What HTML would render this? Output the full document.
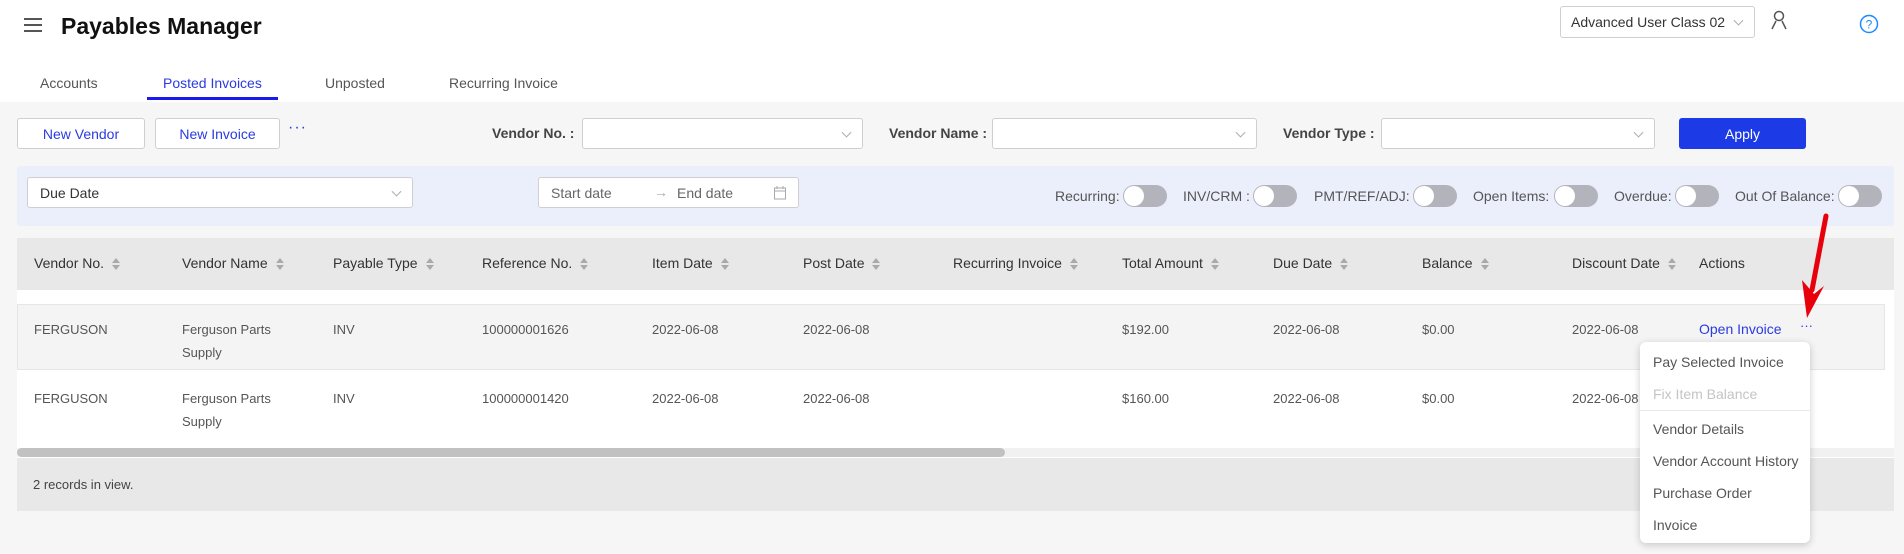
<!DOCTYPE html>
<html><head><meta charset="utf-8"><style>
*{box-sizing:border-box;margin:0;padding:0}
body{width:1904px;height:554px;overflow:hidden;background:#f6f6f6;font-family:"Liberation Sans",Arial,sans-serif;position:relative;color:#333}
.a{position:absolute;white-space:nowrap}
.sel{position:absolute;background:#fff;border:1px solid #cfcfcf;border-radius:3px}
.chev{position:absolute;right:12px;top:50%;width:7px;height:7px;border-right:1px solid #aaa;border-bottom:1px solid #aaa;transform:translateY(-70%) rotate(45deg)}
.btn{position:absolute;background:#fff;border:1px solid #cfcfcf;border-radius:3px;color:#2a3be0;font-size:14px;display:flex;align-items:center;justify-content:center}
.lbl{position:absolute;font-size:14px;font-weight:bold;color:#444;transform:translateY(-50%)}
.tg{position:absolute;width:44px;height:22px;border-radius:11px;background:#b3b3bb;top:185px}
.tg:after{content:"";position:absolute;left:1px;top:1px;width:20px;height:20px;border-radius:50%;background:#fff}
.tl{position:absolute;font-size:14px;color:#555;top:196px;transform:translateY(-50%)}
.th{position:absolute;top:263px;font-size:14px;color:#333;transform:translateY(-50%)}
.srt{display:inline-block;margin-left:8px;vertical-align:middle;width:8px;height:12px;position:relative}
.srt:before,.srt:after{content:"";position:absolute;left:0;border-left:4px solid transparent;border-right:4px solid transparent}
.srt:before{top:0;border-bottom:5px solid #aaa}
.srt:after{bottom:0;border-top:5px solid #aaa}
.td{position:absolute;font-size:13px;color:#555;line-height:23px}
.mi{position:absolute;left:1653px;font-size:14px;color:#555;transform:translateY(-50%)}
</style></head><body>
<div class="a" style="left:0;top:0;width:1904px;height:102px;background:#fff"></div>
<div class="a" style="left:24px;top:18px;width:18px;height:2px;background:#555;box-shadow:0 6px 0 #555,0 12px 0 #555"></div>
<div class="a" style="left:61px;top:13px;font-size:23px;font-weight:bold;color:#111">Payables Manager</div>
<div class="sel" style="left:1560px;top:6px;width:195px;height:32px"><span class="a" style="left:10px;top:7px;font-size:14px;color:#333">Advanced User Class 02</span><span class="chev"></span></div>
<svg class="a" style="left:1770px;top:10px" width="18" height="20" viewBox="0 0 18 20"><circle cx="9" cy="6" r="4.5" fill="none" stroke="#555" stroke-width="1.5"/><path d="M2 19 L6 11 M16 19 L12 11" stroke="#555" stroke-width="1.5" fill="none"/></svg>
<svg class="a" style="left:1859px;top:14px" width="20" height="20" viewBox="0 0 20 20"><circle cx="10" cy="10" r="8.5" fill="none" stroke="#1a8cff" stroke-width="1.5"/><text x="10" y="14.5" font-size="12" text-anchor="middle" fill="#1a8cff" font-family="Liberation Sans">?</text></svg>
<div class="a" style="left:40px;top:75px;font-size:14px;color:#555">Accounts</div>
<div class="a" style="left:163px;top:75px;font-size:14px;color:#2a3be0">Posted Invoices</div>
<div class="a" style="left:325px;top:75px;font-size:14px;color:#555">Unposted</div>
<div class="a" style="left:449px;top:75px;font-size:14px;color:#555">Recurring Invoice</div>
<div class="a" style="left:147px;top:97px;width:131px;height:3px;background:#1a1aee"></div>

<div class="btn" style="left:17px;top:118px;width:128px;height:31px">New Vendor</div>
<div class="btn" style="left:155px;top:118px;width:125px;height:31px">New Invoice</div>
<div class="a" style="left:288px;top:119px;font-size:16px;color:#2a3be0;letter-spacing:1px">···</div>
<div class="lbl" style="left:492px;top:133px">Vendor No. :</div>
<div class="sel" style="left:582px;top:118px;width:281px;height:31px"><span class="chev"></span></div>
<div class="lbl" style="left:889px;top:133px">Vendor Name :</div>
<div class="sel" style="left:992px;top:118px;width:265px;height:31px"><span class="chev"></span></div>
<div class="lbl" style="left:1283px;top:133px">Vendor Type :</div>
<div class="sel" style="left:1381px;top:118px;width:274px;height:31px"><span class="chev"></span></div>
<div class="a" style="left:1679px;top:118px;width:127px;height:31px;background:#1c3ae6;border-radius:3px;color:#fff;font-size:14px;display:flex;align-items:center;justify-content:center">Apply</div>

<div class="a" style="left:17px;top:166px;width:1877px;height:60px;background:#ebeffc;border-radius:3px"></div>
<div class="sel" style="left:27px;top:177px;width:386px;height:31px"><span class="a" style="left:12px;top:7px;font-size:14px;color:#333">Due Date</span><span class="chev"></span></div>
<div class="sel" style="left:538px;top:177px;width:261px;height:31px"><span class="a" style="left:12px;top:7px;font-size:14px;color:#666">Start date</span><span class="a" style="left:115px;top:6px;font-size:14px;color:#aaa">→</span><span class="a" style="left:138px;top:7px;font-size:14px;color:#666">End date</span>
<svg class="a" style="left:235px;top:8px" width="12" height="14" viewBox="0 0 12 14"><rect x="0.5" y="2" width="11" height="11" fill="none" stroke="#aaa"/><path d="M0.5 5h11M3 0v3M9 0v3" stroke="#aaa"/></svg></div>
<div class="tl" style="left:1055px">Recurring:</div><div class="tg" style="left:1123px"></div>
<div class="tl" style="left:1183px">INV/CRM :</div><div class="tg" style="left:1253px"></div>
<div class="tl" style="left:1314px">PMT/REF/ADJ:</div><div class="tg" style="left:1413px"></div>
<div class="tl" style="left:1473px">Open Items:</div><div class="tg" style="left:1554px"></div>
<div class="tl" style="left:1614px">Overdue:</div><div class="tg" style="left:1675px"></div>
<div class="tl" style="left:1735px">Out Of Balance:</div><div class="tg" style="left:1838px"></div>

<div class="a" style="left:17px;top:238px;width:1877px;height:52px;background:#e8e8e8"></div>
<div class="th" style="left:34px">Vendor No.<span class="srt"></span></div>
<div class="th" style="left:182px">Vendor Name<span class="srt"></span></div>
<div class="th" style="left:333px">Payable Type<span class="srt"></span></div>
<div class="th" style="left:482px">Reference No.<span class="srt"></span></div>
<div class="th" style="left:652px">Item Date<span class="srt"></span></div>
<div class="th" style="left:803px">Post Date<span class="srt"></span></div>
<div class="th" style="left:953px">Recurring Invoice<span class="srt"></span></div>
<div class="th" style="left:1122px">Total Amount<span class="srt"></span></div>
<div class="th" style="left:1273px">Due Date<span class="srt"></span></div>
<div class="th" style="left:1422px">Balance<span class="srt"></span></div>
<div class="th" style="left:1572px">Discount Date<span class="srt"></span></div>
<div class="th" style="left:1699px">Actions</div>

<div class="a" style="left:17px;top:290px;width:1877px;height:168px;background:#fff"></div>
<div class="a" style="left:17px;top:304px;width:1868px;height:66px;background:#f4f4f4;border:1px solid #e6e6e6"></div>
<div class="td" style="left:34px;top:318px">FERGUSON</div>
<div class="td" style="left:182px;top:318px">Ferguson Parts<br>Supply</div>
<div class="td" style="left:333px;top:318px">INV</div>
<div class="td" style="left:482px;top:318px">100000001626</div>
<div class="td" style="left:652px;top:318px">2022-06-08</div>
<div class="td" style="left:803px;top:318px">2022-06-08</div>
<div class="td" style="left:1122px;top:318px">$192.00</div>
<div class="td" style="left:1273px;top:318px">2022-06-08</div>
<div class="td" style="left:1422px;top:318px">$0.00</div>
<div class="td" style="left:1572px;top:318px">2022-06-08</div>
<div class="td" style="left:1699px;top:318px;color:#2a3be0;font-size:14px">Open Invoice</div>
<div class="td" style="left:1800px;top:314px;color:#2a3be0">···</div>
<div class="td" style="left:34px;top:387px">FERGUSON</div>
<div class="td" style="left:182px;top:387px">Ferguson Parts<br>Supply</div>
<div class="td" style="left:333px;top:387px">INV</div>
<div class="td" style="left:482px;top:387px">100000001420</div>
<div class="td" style="left:652px;top:387px">2022-06-08</div>
<div class="td" style="left:803px;top:387px">2022-06-08</div>
<div class="td" style="left:1122px;top:387px">$160.00</div>
<div class="td" style="left:1273px;top:387px">2022-06-08</div>
<div class="td" style="left:1422px;top:387px">$0.00</div>
<div class="td" style="left:1572px;top:387px">2022-06-08</div>
<div class="a" style="left:17px;top:448px;width:1877px;height:9px;background:#f1f1f1"></div>
<div class="a" style="left:17px;top:448px;width:988px;height:9px;background:#c1c1c1;border-radius:5px"></div>
<div class="a" style="left:17px;top:458px;width:1877px;height:53px;background:#e8e8e8"></div>
<div class="a" style="left:33px;top:477px;font-size:13px;color:#444">2 records in view.</div>

<div class="a" style="left:1640px;top:342px;width:170px;height:201px;background:#fff;border-radius:6px;box-shadow:0 2px 8px rgba(0,0,0,.2)"></div>
<div class="mi" style="top:362px">Pay Selected Invoice</div>
<div class="mi" style="top:394px;color:#c4c4c4">Fix Item Balance</div>
<div class="a" style="left:1640px;top:410px;width:170px;height:1px;background:#e8e8e8"></div>
<div class="mi" style="top:429px">Vendor Details</div>
<div class="mi" style="top:461px">Vendor Account History</div>
<div class="mi" style="top:493px">Purchase Order</div>
<div class="mi" style="top:525px">Invoice</div>

<svg class="a" style="left:1790px;top:210px" width="50" height="115" viewBox="0 0 50 115"><path d="M36 6 L22 80" stroke="#e8000b" stroke-width="5" stroke-linecap="round" fill="none"/><path d="M12 70 L17 108 L34 76 L24 84 Z" fill="#e8000b"/></svg>
</body></html>
